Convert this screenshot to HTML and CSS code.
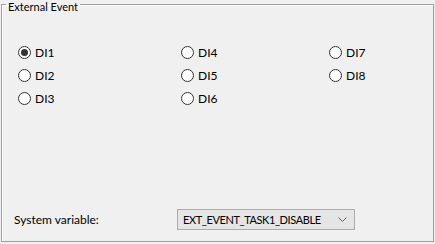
FILE: index.html
```html
<!DOCTYPE html>
<html lang="en">
<head>
<meta charset="UTF-8" />
<title>External Event</title>
<link rel="stylesheet" href="styles.css">
</head>
<body>

<fieldset class="group">
  <legend>External Event</legend>

  <div class="inputs">
    <label class="opt"><input type="radio" name="di" checked> DI1</label>
    <label class="opt"><input type="radio" name="di"> DI4</label>
    <label class="opt"><input type="radio" name="di"> DI7</label>
    <label class="opt"><input type="radio" name="di"> DI2</label>
    <label class="opt"><input type="radio" name="di"> DI5</label>
    <label class="opt"><input type="radio" name="di"> DI8</label>
    <label class="opt"><input type="radio" name="di"> DI3</label>
    <label class="opt"><input type="radio" name="di"> DI6</label>
  </div>

  <div class="sysvar">
    <span class="sysvar-label">System variable:</span>
    <div class="combo">
      <span class="combo-text">EXT_EVENT_TASK1_DISABLE</span>
      <svg width="9" height="5" viewBox="0 0 9 5"><path d="M0.5 0.5 L4.5 4.5 L8.5 0.5" fill="none" stroke="#606060" stroke-width="1"/></svg>
    </div>
  </div>
</fieldset>

</body>
</html>
```

FILE: styles.css
```css
body {
  font-family: Lato, "Noto Sans", sans-serif;
  font-size: 12px;
  color: #000;
  background: #f0f0f0;
  margin: 0;
  padding: 0;
  width: 435px;
  height: 244px;
  overflow: hidden;
}

.group {
  margin: 0 1px;
  padding: 0;
  height: 242px;
  border: 1px solid #a0a0a0;
  box-shadow: inset 1px 1px 0 #ffffff;
  box-sizing: border-box;
  display: flex;
  flex-direction: column;
}

.group legend {
  margin-left: 4px;
  padding: 0 2px;
  height: 9px;
  font-size: 11px;
  line-height: 13px;
}

.inputs {
  display: grid;
  grid-template-columns: 163px 148px 1fr;
  row-gap: 7px;
  margin: 35px 0 0 16px;
}

.opt {
  display: flex;
  align-items: center;
  gap: 4px;
  height: 16px;
}

.opt input {
  appearance: none;
  -webkit-appearance: none;
  margin: 0;
  width: 13px;
  height: 13px;
  border: 1px solid #333;
  border-radius: 50%;
  background: #fff;
  display: grid;
  place-items: center;
}

.opt input:checked::after {
  content: "";
  width: 7px;
  height: 7px;
  border-radius: 50%;
  background: #333;
}

.sysvar {
  margin-top: auto;
  margin-bottom: 11px;
  padding-left: 12px;
  display: flex;
  align-items: center;
}

.sysvar-label {
  width: 163px;
}

.combo {
  width: 178px;
  height: 21px;
  box-sizing: border-box;
  border: 1px solid #adadad;
  background: #e5e5e5;
  display: flex;
  align-items: center;
  justify-content: space-between;
  padding: 0 7px 0 5px;
}

.combo-text {
  white-space: nowrap;
  font-size: 11px;
  letter-spacing: -0.4px;
}
```
